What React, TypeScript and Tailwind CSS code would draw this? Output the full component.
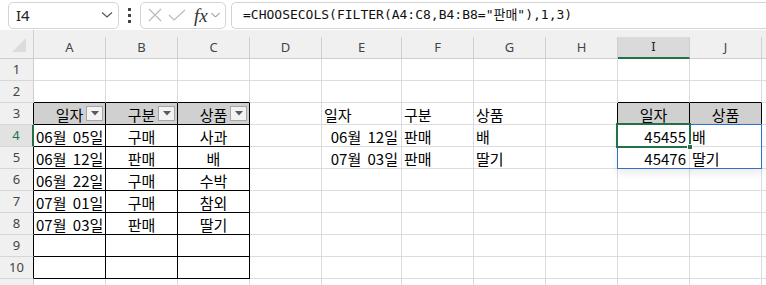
import React from "react";

type Align = "l" | "c" | "r";
type Cell = { t: string; a?: Align; fill?: boolean; filter?: boolean };

const COLS = ["A", "B", "C", "D", "E", "F", "G", "H", "I", "J"];
const ROWS = [1, 2, 3, 4, 5, 6, 7, 8, 9, 10, 11];

const DATA: Record<string, Cell> = {
  A3: { t: "일자", a: "c", fill: true, filter: true },
  B3: { t: "구분", a: "c", fill: true, filter: true },
  C3: { t: "상품", a: "c", fill: true, filter: true },
  A4: { t: "06월 05일", a: "l" },
  B4: { t: "구매", a: "c" },
  C4: { t: "사과", a: "c" },
  A5: { t: "06월 12일", a: "l" },
  B5: { t: "판매", a: "c" },
  C5: { t: "배", a: "c" },
  A6: { t: "06월 22일", a: "l" },
  B6: { t: "구매", a: "c" },
  C6: { t: "수박", a: "c" },
  A7: { t: "07월 01일", a: "l" },
  B7: { t: "구매", a: "c" },
  C7: { t: "참외", a: "c" },
  A8: { t: "07월 03일", a: "l" },
  B8: { t: "판매", a: "c" },
  C8: { t: "딸기", a: "c" },
  E3: { t: "일자", a: "l" },
  F3: { t: "구분", a: "l" },
  G3: { t: "상품", a: "l" },
  E4: { t: "06월 12일", a: "r" },
  F4: { t: "판매", a: "l" },
  G4: { t: "배", a: "l" },
  E5: { t: "07월 03일", a: "r" },
  F5: { t: "판매", a: "l" },
  G5: { t: "딸기", a: "l" },
  I3: { t: "일자", a: "c", fill: true },
  J3: { t: "상품", a: "c", fill: true },
  I4: { t: "45455", a: "r" },
  J4: { t: "배", a: "l" },
  I5: { t: "45476", a: "r" },
  J5: { t: "딸기", a: "l" },
};

const inTable = (r: number, c: number) =>
  (r >= 3 && r <= 10 && c >= 1 && c <= 3) || (r === 3 && (c === 9 || c === 10));

function FilterButton() {
  return (
    <div className="absolute right-[2px] top-[3px] flex h-[15px] w-[17px] items-center justify-center border border-[#a6a6a6] bg-[#f3f3f3]">
      <svg width="8" height="5" viewBox="0 0 8 5">
        <path d="M0 0 L8 0 L4 4.5 Z" fill="#5a5a5a" />
      </svg>
    </div>
  );
}

function FormulaBar() {
  return (
    <div className="flex h-[30px] items-center bg-white pl-[8px]">
      <div className="flex h-[27px] w-[111px] items-center justify-between rounded-[5px] border border-[#d4d4d4] pl-[7px] pr-[5px]">
        <span className="text-[15px] text-[#222] [font-family:'Noto_Sans',sans-serif]">I4</span>
        <svg width="12" height="8" viewBox="0 0 12 8">
          <path d="M1 1.5 L6 6 L11 1.5" fill="none" stroke="#555" strokeWidth="1.2" />
        </svg>
      </div>
      <div className="flex w-[21px] flex-col items-center gap-[3px]">
        <div className="h-[3px] w-[3px] bg-[#444]" />
        <div className="h-[3px] w-[3px] bg-[#444]" />
        <div className="h-[3px] w-[3px] bg-[#444]" />
      </div>
      <div className="flex h-[27px] w-[86px] items-center rounded-[5px] border border-[#d4d4d4] pl-[7px]">
        <svg width="14" height="14" viewBox="0 0 14 14">
          <path d="M1 1 L13 13 M13 1 L1 13" stroke="#b8b8b8" strokeWidth="1.1" />
        </svg>
        <svg width="18" height="12" viewBox="0 0 18 12" className="ml-[6px]">
          <path d="M1 6 L6 11 L17 1" fill="none" stroke="#b8b8b8" strokeWidth="1.1" />
        </svg>
        <span className="ml-[8px] text-[19px] italic leading-none text-[#333] [font-family:'Liberation_Serif',serif]">fx</span>
        <svg width="9" height="6" viewBox="0 0 9 6" className="ml-[3px]">
          <path d="M0.5 1 L4.5 5 L8.5 1" fill="none" stroke="#777" strokeWidth="1" />
        </svg>
      </div>
      <div className="ml-[5px] flex h-[27px] flex-1 items-center rounded-l-[5px] border-y border-l border-[#d4d4d4] pl-[11px]">
        <span className="whitespace-pre text-[13px] text-[#111] [font-family:'DejaVu_Sans_Mono','Noto_Sans_CJK_KR',monospace]">
          =CHOOSECOLS(FILTER(A4:C8,B4:B8="판매"),1,3)
        </span>
      </div>
    </div>
  );
}

function HeaderRow() {
  return (
    <div className="flex h-[29px] items-end bg-[#f0f0f0]">
      <div className="flex h-[29px] w-[34px] shrink-0 items-center justify-center border-r border-b border-[#cfcfcf] pl-[4px] pt-[2px]">
        <svg width="16" height="16" viewBox="0 0 16 16">
          <path d="M15 1 L15 15 L1 15 Z" fill="#dcdcdc" />
        </svg>
      </div>
      {COLS.map((c) => (
        <div
          key={c}
          className={
            "flex h-[22px] shrink-0 items-center justify-center border-r border-[#cfcfcf] text-[13px] [font-family:'Noto_Sans',sans-serif] " +
            (c === "E" ? "w-[80px] " : "w-[72px] ") +
            (c === "I"
              ? "border-b-2 border-b-[#217346] bg-[#dadada] text-[#222]"
              : "border-b text-[#444]")
          }
        >
          {c}
        </div>
      ))}
      <div className="h-[22px] flex-1 border-b border-[#cfcfcf]" />
    </div>
  );
}

function GridRow({ r }: { r: number }) {
  return (
    <div className="flex h-[22px]">
      <div
        className={
          "flex w-[34px] shrink-0 items-center justify-center border-b border-b-[#d6d6d6] text-[13px] [font-family:'Noto_Sans',sans-serif] " +
          (r === 4
            ? "border-r-2 border-r-[#217346] bg-[#e2e2e2] text-[#217346]"
            : "border-r bg-[#f0f0f0] text-[#444] " +
              (inTable(r, 1) ? "border-r-black" : "border-r-[#cfcfcf]"))
        }
      >
        {r <= 10 ? r : ""}
      </div>
      {COLS.map((col, i) => {
        const c = i + 1;
        const cell = DATA[col + r];
        const rightDark = inTable(r, c) || inTable(r, c + 1);
        const bottomDark = inTable(r, c) || inTable(r + 1, c);
        return (
          <div
            key={col}
            className={
              "relative flex shrink-0 items-center border-r border-b text-[15px] leading-none text-black [word-spacing:3px] [font-family:'Noto_Sans_CJK_KR',sans-serif] " +
              (col === "E" ? "w-[80px] " : "w-[72px] ") +
              (rightDark ? "border-r-black " : "border-r-[#dcdcdc] ") +
              (bottomDark ? "border-b-black " : "border-b-[#dcdcdc] ") +
              (cell?.fill ? "bg-[#d0d0d0] " : "bg-white ") +
              (cell?.a === "c"
                ? "justify-center"
                : cell?.a === "r"
                ? "justify-end pr-[3px]"
                : "justify-start pl-[2px]")
            }
          >
            {cell && <span className="pt-[1px]">{cell.t}</span>}
            {cell?.filter && <FilterButton />}
            {col === "I" && r === 4 && (
              <>
                <div className="pointer-events-none absolute left-[-1px] top-[-1px] z-10 h-[45px] w-[145px] border border-[#2f6fd0] shadow-[0_5px_7px_rgba(0,0,0,0.07)]" />
                <div className="pointer-events-none absolute left-[-2px] top-[-2px] z-20 h-[25px] w-[75px] border-2 border-[#217346]" />
                <div className="absolute right-[-4px] bottom-[-4px] z-30 h-[6px] w-[6px] border border-white bg-[#217346]" />
              </>
            )}
          </div>
        );
      })}
      <div className="flex-1 border-b border-[#dcdcdc] bg-white" />
    </div>
  );
}

export default function App() {
  return (
    <div className="h-[285px] w-[766px] overflow-hidden bg-white">
      <FormulaBar />
      <HeaderRow />
      {ROWS.map((r) => (
        <GridRow key={r} r={r} />
      ))}
    </div>
  );
}
